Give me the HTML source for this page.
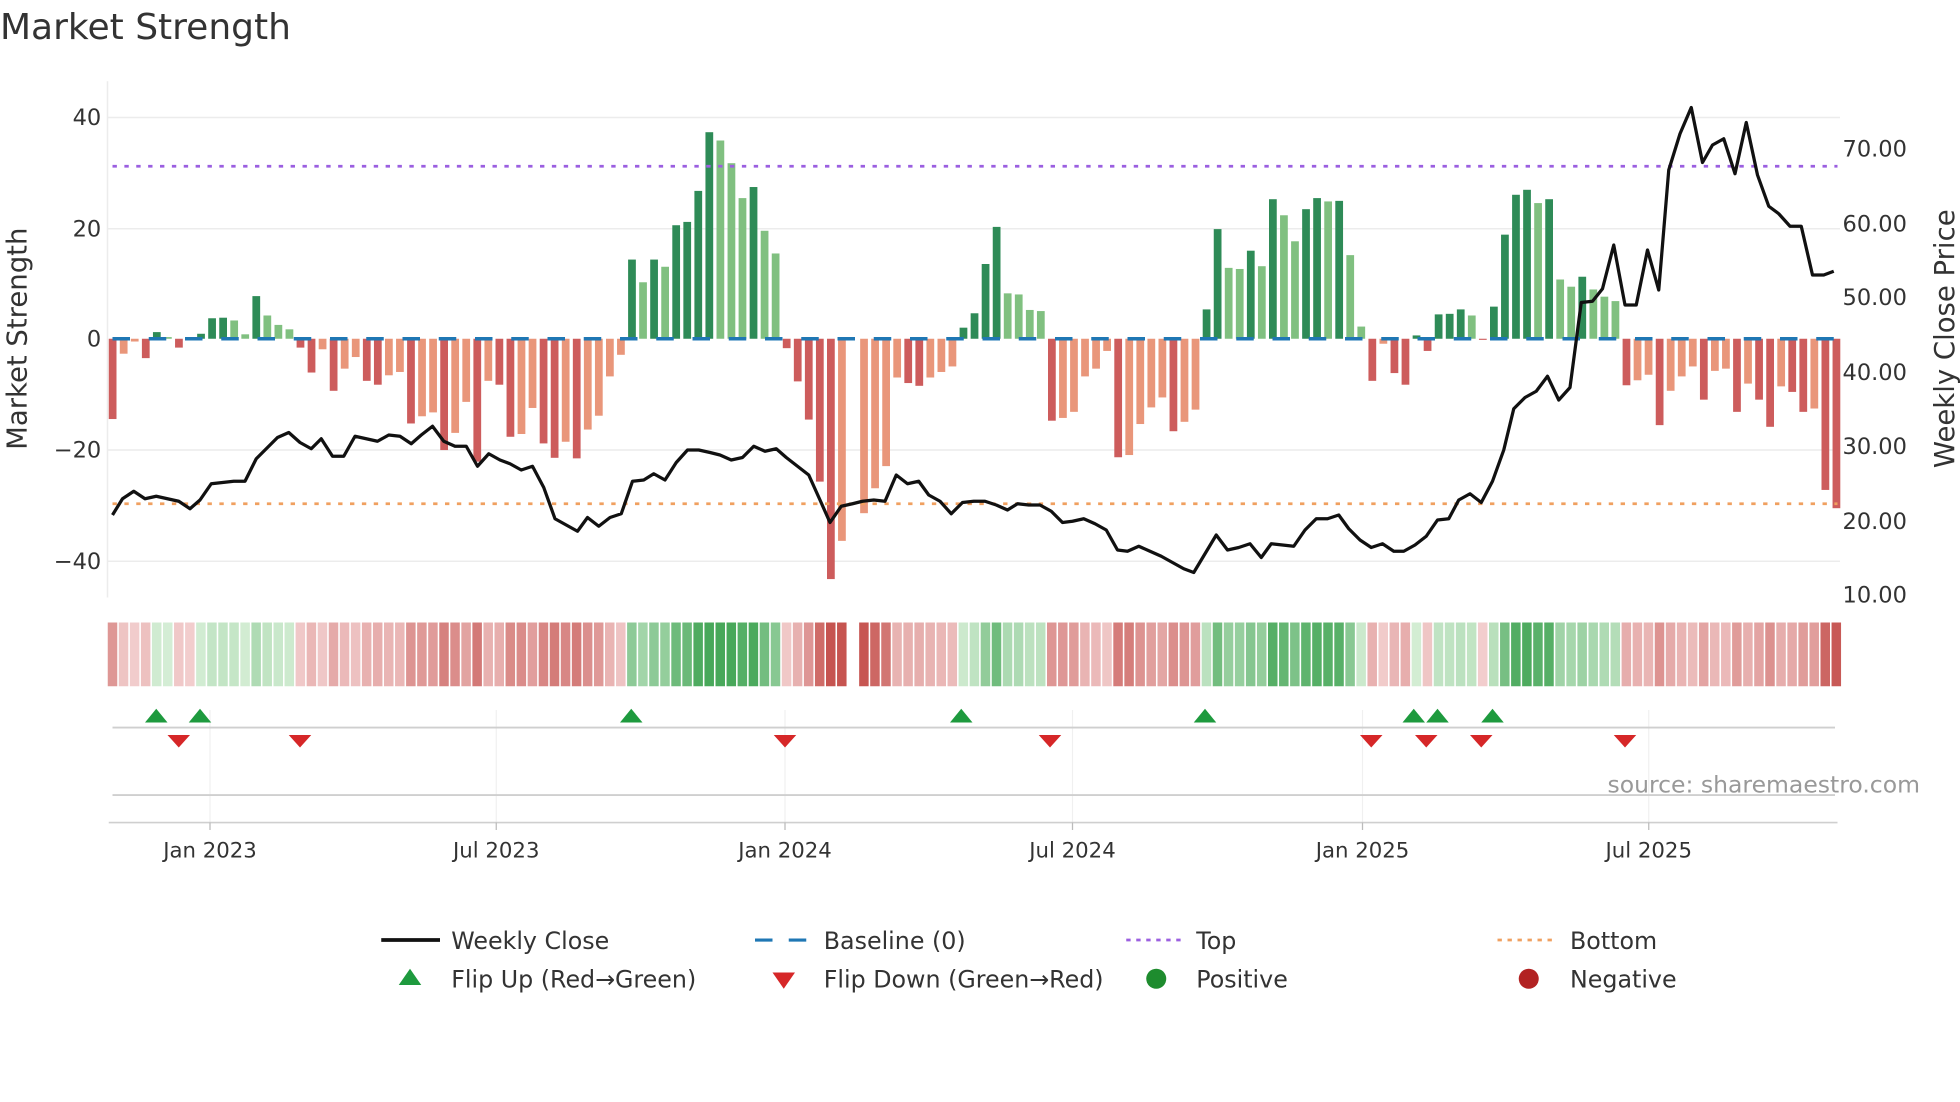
<!DOCTYPE html>
<html><head><meta charset="utf-8">
<style>
html,body{margin:0;padding:0;background:#fff;}
svg{display:block;}
text{font-family:"DejaVu Sans","Liberation Sans",sans-serif;fill:#333;}
</style></head>
<body>
<svg id="c" width="1960" height="1102" viewBox="0 0 1568 881.6" xmlns="http://www.w3.org/2000/svg">
<rect width="1568" height="881.6" fill="#fff"/>
<text x="0" y="31" font-size="28.8">Market Strength</text>
<g stroke="#ececec" stroke-width="1.2">
<line x1="86" y1="94" x2="1472" y2="94"/>
<line x1="86" y1="183" x2="1472" y2="183"/>
<line x1="86" y1="360" x2="1472" y2="360"/>
<line x1="86" y1="449" x2="1472" y2="449"/>
<line x1="86" y1="65" x2="86" y2="478"/>
</g>
<g stroke="#f0f0f0" stroke-width="1">
<line x1="168" y1="568" x2="168" y2="658"/><line x1="397" y1="568" x2="397" y2="658"/>
<line x1="628" y1="568" x2="628" y2="658"/><line x1="858" y1="568" x2="858" y2="658"/>
<line x1="1090" y1="568" x2="1090" y2="658"/><line x1="1319" y1="568" x2="1319" y2="658"/>
</g>
<g id="bars"></g>
<line x1="90" y1="271" x2="1470" y2="271" stroke="#1f77b4" stroke-width="2.8" stroke-dasharray="14 15"/>
<line x1="90" y1="133" x2="1470" y2="133" stroke="#9b5fe0" stroke-width="2.2" stroke-dasharray="3.5 6"/>
<line x1="90" y1="403" x2="1470" y2="403" stroke="#f0a060" stroke-width="2.2" stroke-dasharray="3.5 6"/>
<polyline id="price" fill="none" stroke="#111" stroke-width="2.6" stroke-linejoin="round" points="90,412 98,399 107,393 116,399 125,397 134,399 143,401 152,407 160,400 169,387 178,386 187,385 196,385 205,367 214,358 222,350 231,346 240,354 249,359 257,351 266,365 275,365 284,349 293,351 302,353 311,348 320,349 329,355 337,348 346,341 355,353 364,357 373,357 382,373 391,363 400,368 408,371 417,376 426,373 435,390 444,415 453,420 462,425 470,414 479,421 488,414 497,411 506,385 515,384 523,379 532,384 541,370 550,360 559,360 568,362 576,364 585,368 594,366 603,357 612,361 621,359 629,366 638,373 647,380 656,400 664,418 673,405 682,403 690,401 699,400 708,401 717,380 726,387 735,385 743,396 752,401 761,411 770,402 779,401 788,401 797,404 806,408 814,403 823,404 832,404 841,409 850,418 858,417 867,415 876,419 885,424 894,440 902,441 911,437 920,441 929,445 938,450 947,455 955,458 964,443 973,428 982,440 991,438 1000,435 1009,446 1017,435 1026,436 1035,437 1044,424 1053,415 1062,415 1071,412 1079,423 1088,432 1097,438 1106,435 1115,441 1123,441 1132,436 1141,429 1150,416 1159,415 1167,400 1176,395 1185,402 1194,385 1203,360 1211,327 1220,318 1229,313 1238,301 1247,320 1256,310 1265,242 1274,241 1282,231 1291,196 1300,244 1309,244 1318,200 1327,232 1335,136 1344,107 1353,86 1362,130 1370,116 1379,111 1388,139 1397,98 1406,140 1415,165 1423,171 1432,181 1441,181 1450,220 1459,220 1467,217"/>
<g id="strip"></g>
<line x1="90" y1="582" x2="1468" y2="582" stroke="#cfcfcf" stroke-width="1.5"/>
<line x1="90" y1="636" x2="1468" y2="636" stroke="#cfcfcf" stroke-width="1.5"/>
<line x1="87" y1="658" x2="1470" y2="658" stroke="#cfcfcf" stroke-width="1.3"/>
<g fill="#1e9a3e" id="ups"></g>
<g fill="#d62728" id="downs"></g>
<g stroke="#bbb" stroke-width="1"><line x1="168" y1="658" x2="168" y2="664"/><line x1="397" y1="658" x2="397" y2="664"/><line x1="628" y1="658" x2="628" y2="664"/><line x1="858" y1="658" x2="858" y2="664"/><line x1="1090" y1="658" x2="1090" y2="664"/><line x1="1319" y1="658" x2="1319" y2="664"/></g>
<text x="1536" y="634" font-size="18.8" text-anchor="end" style="fill:#999">source: sharemaestro.com</text>
<g font-size="18" text-anchor="end">
<text x="81" y="100">40</text><text x="81" y="189">20</text><text x="81" y="277">0</text>
<text x="81" y="366">−20</text><text x="81" y="455">−40</text>
</g>
<g font-size="18">
<text x="1474" y="125">70.00</text><text x="1474" y="185">60.00</text><text x="1474" y="244">50.00</text>
<text x="1474" y="304">40.00</text><text x="1474" y="363">30.00</text><text x="1474" y="423">20.00</text><text x="1474" y="482">10.00</text>
</g>
<g font-size="17" text-anchor="middle">
<text x="168" y="686">Jan 2023</text><text x="397" y="686">Jul 2023</text><text x="628" y="686">Jan 2024</text>
<text x="858" y="686">Jul 2024</text><text x="1090" y="686">Jan 2025</text><text x="1319" y="686">Jul 2025</text>
</g>
<text transform="translate(21,271) rotate(-90)" font-size="22" text-anchor="middle">Market Strength</text>
<text transform="translate(1563,271) rotate(-90)" font-size="22" text-anchor="middle">Weekly Close Price</text>
<g font-size="19">
<line x1="305" y1="752" x2="352" y2="752" stroke="#111" stroke-width="3"/>
<text x="361" y="759">Weekly Close</text>
<line x1="604" y1="752" x2="646" y2="752" stroke="#1f77b4" stroke-width="2.5" stroke-dasharray="14 13"/>
<text x="659" y="759">Baseline (0)</text>
<line x1="901" y1="752" x2="945" y2="752" stroke="#9b5fe0" stroke-width="2.2" stroke-dasharray="3.5 4.5"/>
<text x="957" y="759">Top</text>
<line x1="1198" y1="752" x2="1243" y2="752" stroke="#f0a060" stroke-width="2.2" stroke-dasharray="3.5 4.5"/>
<text x="1256" y="759">Bottom</text>
<polygon points="319,788 328,775 337,788" fill="#1e9a3e"/>
<text x="361" y="790">Flip Up (Red→Green)</text>
<polygon points="618,778 636,778 627,791" fill="#d62728"/>
<text x="659" y="790">Flip Down (Green→Red)</text>
<circle cx="925" cy="783" r="8" fill="#1e8c2e"/>
<text x="957" y="790">Positive</text>
<circle cx="1223" cy="783" r="8" fill="#b22222"/>
<text x="1256" y="790">Negative</text>
</g>
</svg>
<script>
(function(){
var d="R-14.5 S-2.7 S-0.5 R-3.5 D1.2 L0.3 R-1.6 S-0.3 D0.9 D3.7 D3.8 L3.3 L0.8 D7.7 L4.2 L2.5 L1.7 R-1.6 R-6.1 S-1.9 R-9.4 S-5.4 S-3.3 R-7.6 R-8.3 S-6.6 S-6 R-15.3 S-14 S-13.3 R-20.1 S-17 S-11.4 R-22.2 S-7.6 R-8.3 R-17.7 S-17.2 S-12.5 R-18.9 R-21.5 S-18.6 R-21.6 S-16.4 S-13.9 S-6.8 S-2.9 D14.3 L10.2 D14.3 L13 D20.5 D21.1 D26.7 D37.3 L35.8 L31.7 L25.4 D27.4 L19.5 L15.4 R-1.7 R-7.7 R-14.6 R-25.8 R-43.4 S-36.5 X0 S-31.5 S-27 S-23 S-7 R-8 R-8.5 S-7 S-6 S-5 D2 D4.6 D13.5 D20.2 L8.2 L8 L5.2 L5 R-14.8 S-14.3 S-13.2 S-6.8 S-5.4 S-2.2 R-21.4 S-21 S-15.4 S-12.4 S-10.6 R-16.7 S-15 S-12.8 D5.3 D19.8 L12.8 L12.6 D15.9 L13.1 D25.2 L22.3 L17.6 D23.4 D25.4 L24.8 D24.9 L15.1 L2.2 R-7.6 S-0.9 R-6.2 R-8.3 D0.6 R-2.2 D4.4 D4.5 D5.3 L4.2 R-0.2 D5.8 D18.8 D26 D26.9 L24.5 D25.2 L10.7 L9.4 D11.2 L8.9 L7.6 L6.8 R-8.4 S-7.5 S-6.5 R-15.6 S-9.4 S-6.8 S-5 R-11 S-5.8 S-5.4 R-13.2 S-8.1 R-11 R-15.9 S-8.6 R-9.6 R-13.2 S-12.6 R-27.3 R-30.6".split(" ");
var col={D:"#2e8b57",L:"#80c080",R:"#cd5c5c",S:"#e9967a"};
var NS="http://www.w3.org/2000/svg",b=document.getElementById("bars"),s=document.getElementById("strip");
function mix(a,c,t){var r=[];for(var k=0;k<3;k++){r.push(Math.round(a[k]+(c[k]-a[k])*t));}return "rgb("+r.join(",")+")";}
for(var i=0;i<d.length;i++){
 var t=d[i][0],v=parseFloat(d[i].slice(1));if(t=="X")continue;
 var x=90.1+i*8.84;
 var r=document.createElementNS(NS,"rect");
 var h=Math.abs(v)*4.43;
 r.setAttribute("x",x-3.1);r.setAttribute("width",6.2);
 r.setAttribute("y",v>=0?271-h:271);r.setAttribute("height",Math.max(h,0.8));
 r.setAttribute("fill",col[t]);b.appendChild(r);
 var q=document.createElementNS(NS,"rect");
 q.setAttribute("x",x-3.9);q.setAttribute("width",7.6);q.setAttribute("y",498);q.setAttribute("height",51);
 var m=Math.min(Math.abs(v)/(v>=0?28:32),1);
 q.setAttribute("fill",v>=0?mix([214,238,214],[72,168,90],m):mix([242,206,206],[198,84,80],m));
 s.appendChild(q);
}
var ups=[125,160,505,769,964,1131,1150,1194],dn=[143,240,628,840,1097,1141,1185,1300];
var U=document.getElementById("ups"),D=document.getElementById("downs");
ups.forEach(function(x){var p=document.createElementNS(NS,"polygon");p.setAttribute("points",(x-9)+",578 "+x+",567 "+(x+9)+",578");U.appendChild(p);});
dn.forEach(function(x){var p=document.createElementNS(NS,"polygon");p.setAttribute("points",(x-9)+",588 "+(x+9)+",588 "+x+",598");D.appendChild(p);});
})();
</script>
</body></html>
